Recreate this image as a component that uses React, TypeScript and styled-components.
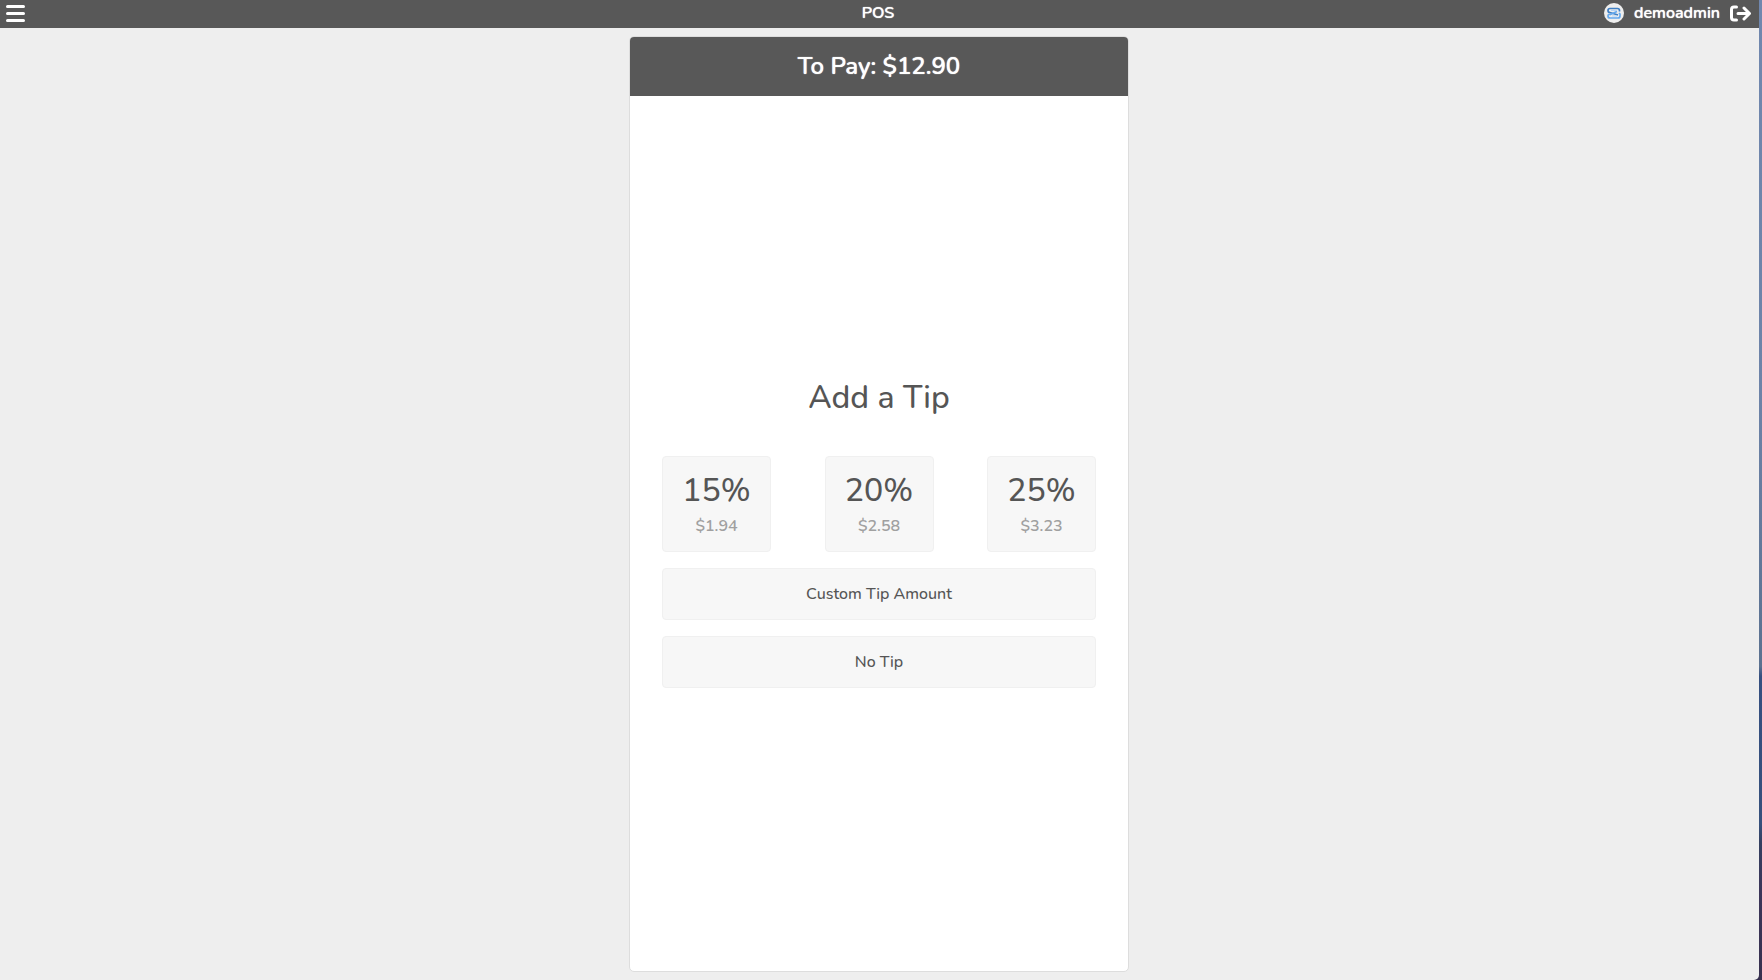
import React from "react";
import styled, { createGlobalStyle } from "styled-components";

const GlobalStyle = createGlobalStyle`
  *, *::before, *::after { box-sizing: border-box; }
  body {
    margin: 0;
    color: #555;
    font-family: Nunito, Lato, "Open Sans", sans-serif;
    font-size: 16px;
    line-height: 24px;
  }
  button { font: inherit; color: inherit; cursor: pointer; }
  h1, h2, p { margin: 0; }
`;

const Desktop = styled.div`
  display: flex;
  min-height: 100vh;
  padding-right: 3px;
  background: linear-gradient(
    #7087ae 0,
    #6d83a8 40%,
    #5b7190 68%,
    #354f80 69%,
    #36507c 84%,
    #343f60 86%,
    #3b3559 91%,
    #37304f 100%
  );
`;

const AppWindow = styled.div`
  flex: 1;
  display: flex;
  flex-direction: column;
  background: #eee;
  border-bottom-right-radius: 5px;
`;

const TopBar = styled.header`
  display: grid;
  grid-template-columns: 1fr auto 1fr;
  align-items: center;
  height: 28px;
  padding: 0 8px 3px 5px;
  background: #585858;
  color: #fff;
  font-weight: 600;
  text-shadow: 0 0 1px #fff;
`;

const BarTitle = styled.h1`
  font-size: 16px;
  font-weight: 600;
`;

const IconButton = styled.button`
  display: flex;
  justify-self: start;
  padding: 0;
  border: 0;
  background: none;
`;

const Icon = styled.svg`
  display: block;
  width: 21px;
  height: 20px;
  fill: none;
  stroke: currentColor;
  stroke-width: 3;
  stroke-linecap: round;
  stroke-linejoin: round;
`;

const Account = styled.div`
  display: flex;
  align-items: center;
  justify-self: end;
  gap: 10px;
`;

const Avatar = styled.svg`
  display: block;
  width: 20px;
  height: 20px;
`;

const Main = styled.main`
  flex: 1;
  display: flex;
  justify-content: center;
  padding: 8px 1px 8px 0;
`;

const Card = styled.section`
  display: flex;
  flex-direction: column;
  width: 100%;
  max-width: 500px;
  border: 1px solid #ddd;
  border-radius: 5px;
  background: #fff;
  overflow: hidden;
`;

const CardHeader = styled.h2`
  padding: 13px 16px 14px;
  background: #585858;
  color: #fff;
  font-size: 24px;
  font-weight: 600;
  line-height: 32px;
  text-align: center;
  text-shadow: 0 0 1px #fff;
`;

const CardBody = styled.div`
  flex: 1;
  display: flex;
  flex-direction: column;
  justify-content: center;
  gap: 16px;
  padding: 0 32px;
`;

const Prompt = styled.h2`
  margin-bottom: 24px;
  font-size: 32px;
  font-weight: 500;
  line-height: 37px;
  text-align: center;
`;

const TipRow = styled.div`
  display: flex;
  justify-content: space-between;
`;

const OptionButton = styled.button`
  padding: 13px 16px;
  border: 1px solid #f0f0f0;
  border-radius: 4px;
  background: #f7f7f7;
  font-weight: 500;
  text-align: center;
`;

const TipButton = styled(OptionButton)`
  display: flex;
  flex-direction: column;
  align-items: center;
  gap: 3px;
  width: 109px;
  padding: 14px 0 13px;
`;

const Percent = styled.span`
  font-size: 32px;
  line-height: 40px;
`;

const Amount = styled.span`
  color: #a0a0a0;
  font-weight: 600;
`;

const tips = [
  { percent: "15%", amount: "$1.94" },
  { percent: "20%", amount: "$2.58" },
  { percent: "25%", amount: "$3.23" },
];

export default function App() {
  return (
    <Desktop>
      <GlobalStyle />
      <AppWindow>
        <TopBar>
          <IconButton aria-label="Menu">
            <Icon viewBox="0 0 21 20" aria-hidden="true">
              <path d="M2.500 3.500H18.500M2.500 10.500H18.500M2.500 17.500H18.500" />
            </Icon>
          </IconButton>
          <BarTitle>POS</BarTitle>
          <Account>
            <Avatar viewBox="0 0 20 20" aria-hidden="true">
              <circle cx="10" cy="10" r="10" fill="#eee" />
              <path
                d="M15.500 8.500V7.500Q15.500 5.500 13.500 5.500H6Q4 5.500 4 7.500T6 9.500L14 12"
                fill="none"
                stroke="#3f7fc4"
                strokeWidth="1.700"
              />
              <path
                d="M15 10L16 11V13Q16 15 14 15H6Q4 15 4 13T6 11.500L13 8.500"
                fill="none"
                stroke="#65a9ee"
                strokeWidth="1.700"
              />
              <path d="M7 7.500H13M8 13H13" stroke="#b7d5f5" />
            </Avatar>
            <span>demoadmin</span>
            <IconButton aria-label="Log out">
              <Icon viewBox="0 0 21 20" aria-hidden="true">
                <path d="M6.500 4H4Q1.500 4 1.500 6.500V14.500Q1.500 17 4 17H6.500M8 10.500H19M14 5L19.500 10.500L14 16" />
              </Icon>
            </IconButton>
          </Account>
        </TopBar>
        <Main>
          <Card>
            <CardHeader>To Pay: $12.90</CardHeader>
            <CardBody>
              <Prompt>Add a Tip</Prompt>
              <TipRow>
                {tips.map((tip) => (
                  <TipButton key={tip.percent}>
                    <Percent>{tip.percent}</Percent>
                    <Amount>{tip.amount}</Amount>
                  </TipButton>
                ))}
              </TipRow>
              <OptionButton>Custom Tip Amount</OptionButton>
              <OptionButton>No Tip</OptionButton>
            </CardBody>
          </Card>
        </Main>
      </AppWindow>
    </Desktop>
  );
}
